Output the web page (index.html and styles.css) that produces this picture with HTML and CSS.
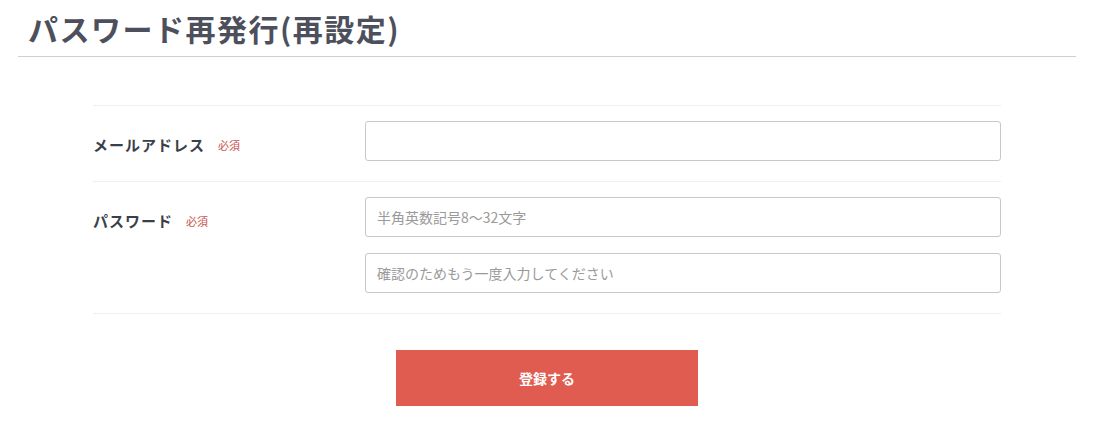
FILE: index.html
```html
<!DOCTYPE html>
<html lang="ja">
<head>
<meta charset="utf-8">
<title>パスワード再発行(再設定)</title>
<link rel="stylesheet" href="styles.css">
</head>
<body>
<div class="page">
  <h1 class="page-title">パスワード再発行(再設定)</h1>
  <form class="form">
    <div class="form-rows">
      <div class="form-row">
        <div class="form-label"><span class="label-text">メールアドレス</span><span class="required">必須</span></div>
        <div class="form-fields">
          <input class="text-input" type="email">
        </div>
      </div>
      <div class="form-row">
        <div class="form-label"><span class="label-text">パスワード</span><span class="required">必須</span></div>
        <div class="form-fields">
          <input class="text-input" type="password" placeholder="半角英数記号8〜32文字">
          <input class="text-input" type="password" placeholder="確認のためもう一度入力してください">
        </div>
      </div>
    </div>
    <div class="form-actions">
      <button class="submit-btn" type="button">登録する</button>
    </div>
  </form>
</div>
</body>
</html>
```

FILE: styles.css
```css
* { box-sizing: border-box; }
html, body { margin: 0; padding: 0; background: #fff; }
body {
  font-family: "Noto Sans CJK JP", "Noto Sans", sans-serif;
  color: #333;
}
.page {
  padding: 0 18px;
}
.page-title {
  margin: 0;
  padding: 8px 0 7px 10px;
  font-size: 30px;
  line-height: 41px;
  letter-spacing: 1.5px;
  font-weight: 700;
  color: #4d505c;
  border-bottom: 1px solid #cfcfcf;
}
.form {
  width: 908px;
  margin: 48px auto 0;
}
.form-rows {
  border-bottom: 1px solid #efefef;
}
.form-row {
  display: flex;
  align-items: flex-start;
  border-top: 1px solid #efefef;
  padding: 15px 0 20px;
}
.form-label {
  width: 272px;
  flex: none;
  padding-top: 13px;
  line-height: 22px;
  display: flex;
  align-items: center;
}
.label-text {
  font-size: 15px;
  font-weight: 700;
  letter-spacing: 1px;
  color: #3a3f4a;
}
.required {
  margin-left: 13px;
  font-size: 11px;
  color: #c9544b;
}
.form-fields {
  flex: 1;
  display: flex;
  flex-direction: column;
  gap: 16px;
}
.text-input {
  display: block;
  width: 100%;
  height: 40px;
  border: 1px solid #c8c8c8;
  border-radius: 3px;
  padding: 0 11px;
  font-family: "Noto Sans CJK JP", "Noto Sans", sans-serif;
  font-size: 14px;
  color: #333;
  background: #fff;
  outline: none;
}
.text-input::placeholder {
  color: #9a9a9a;
}
.form-actions {
  display: flex;
  justify-content: center;
  padding-top: 36px;
}
.submit-btn {
  width: 302px;
  height: 56px;
  border: none;
  border-radius: 0;
  background: #e05c50;
  color: #fff;
  font-family: "Noto Sans CJK JP", "Noto Sans", sans-serif;
  font-size: 14px;
  font-weight: 700;
  cursor: pointer;
}
```
